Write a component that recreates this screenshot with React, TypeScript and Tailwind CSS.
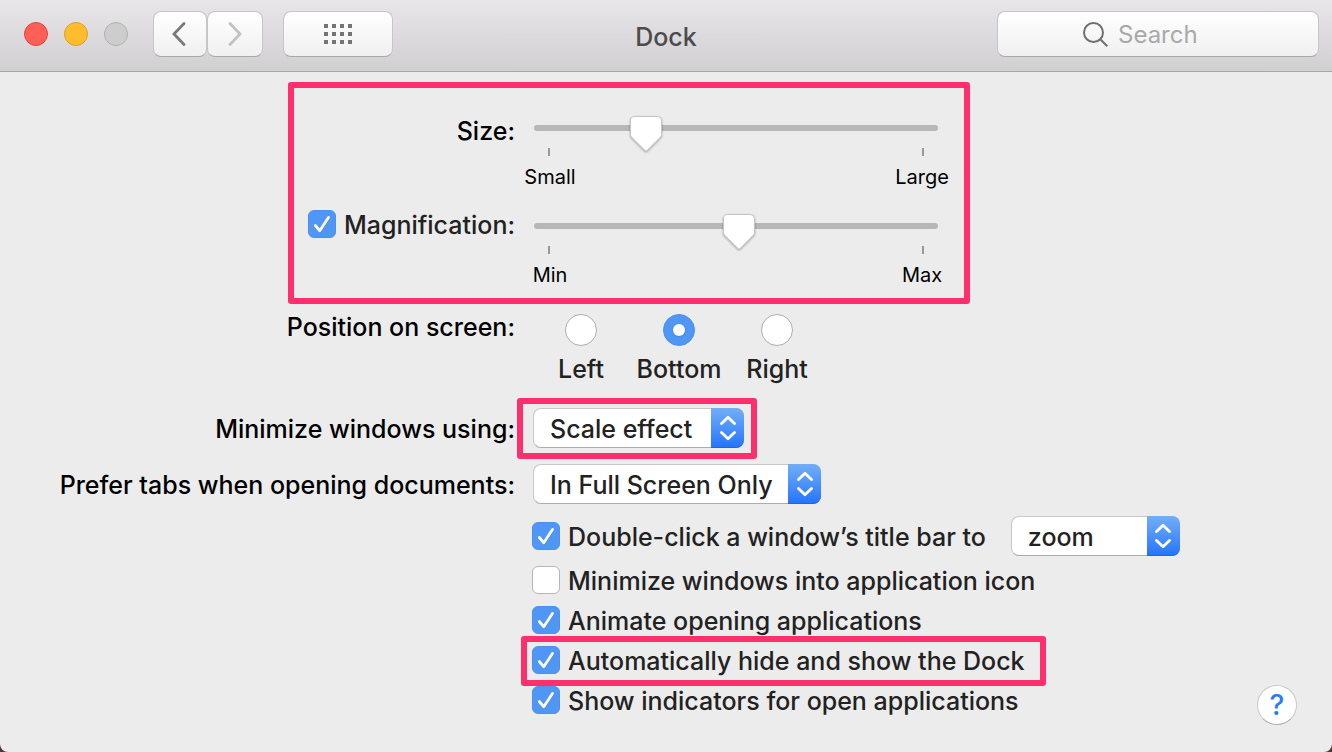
/**
 * Dock preferences pane
 *
 * Title bar with navigation and search, then the Dock settings form.
 */

import React, { useState } from 'react';
import { clsx } from 'clsx';
import { twMerge } from 'tailwind-merge';

function cn(...inputs: any[]) {
  return twMerge(clsx(inputs));
}

// ── Shared bits ───────────────────────────────────────────────────────────────
const toolbarButton =
  'flex items-center justify-center h-[46px] rounded-lg border border-[#c6c5c7] border-b-[#a9a8aa] bg-linear-to-b from-white to-[#f0f0f0]';

const rowGrid = 'grid grid-cols-[515fr_800fr] gap-x-[17px]';

function Highlight({ className }: { className: string }) {
  return (
    <div
      className={cn(
        'absolute rounded-[3px] border-6 border-[#ff2f6d] pointer-events-none',
        className
      )}
    />
  );
}

interface CheckProps {
  label: string;
  defaultChecked?: boolean;
  className?: string;
}

function Check({ label, defaultChecked = false, className }: CheckProps) {
  return (
    <label className={cn('flex items-center gap-2 text-[#222]', className)}>
      <span className="relative size-7 shrink-0">
        <input
          type="checkbox"
          defaultChecked={defaultChecked}
          className="peer block appearance-none size-7 rounded-md border border-[#b5b5b5] bg-white checked:border-[#4b92ee] checked:bg-[#5097f5]"
        />
        <svg
          viewBox="0 0 28 28"
          className="absolute inset-0 hidden peer-checked:block pointer-events-none"
          fill="none"
          strokeLinecap="round"
          strokeLinejoin="round"
          strokeWidth="2.8"
        >
          <path d="M7.5 16.2l4.5 5.3 8.5-13" stroke="#3f7fd2" strokeOpacity="0.6" />
          <path d="M7.3 15.5l4.5 5.3 8.7-13.3" stroke="#fff" />
        </svg>
      </span>
      <span className="pt-0.5 whitespace-nowrap">{label}</span>
    </label>
  );
}

interface SliderProps {
  id: string;
  name: string;
  initial: number;
  low: string;
  high: string;
}

function Slider({ id, name, initial, low, high }: SliderProps) {
  const [value, setValue] = useState(initial);

  return (
    <div className="w-[404px] ml-0.5 pt-1">
      <div className="relative h-9">
        <input
          id={id}
          aria-label={name}
          type="range"
          min={0}
          max={372}
          value={value}
          onChange={(e) => setValue(Number(e.target.value))}
          className="block w-full h-6 appearance-none bg-transparent [&::-webkit-slider-runnable-track]:h-1.5 [&::-webkit-slider-runnable-track]:rounded-full [&::-webkit-slider-runnable-track]:bg-[#b7b7b7] [&::-webkit-slider-thumb]:appearance-none [&::-webkit-slider-thumb]:w-8 [&::-webkit-slider-thumb]:h-1.5"
        />
        <svg
          viewBox="0 0 32 36"
          className="absolute top-0 w-8 h-9 overflow-visible pointer-events-none drop-shadow-[0_1px_1px_rgba(0,0,0,0.3)]"
          style={{ left: `calc((100% - 32px) * ${value / 372})` }}
        >
          <path
            d="M4.5 .5h23a4 4 0 0 1 4 4v14a4 4 0 0 1-1 2.6L17 34.5a1.3 1.3 0 0 1-2 0L1.5 21.1a4 4 0 0 1-1-2.6V4.5a4 4 0 0 1 4-4z"
            fill="#fff"
            stroke="#c4c4c4"
            strokeWidth="1"
          />
        </svg>
      </div>
      <div className="flex justify-between px-3.5 -mt-1">
        <span className="w-0.5 h-2 bg-[#9a9a9a]" />
        <span className="w-0.5 h-2 bg-[#9a9a9a]" />
      </div>
      <div className="flex justify-between -mx-4 mt-[9px] text-[20px] leading-6 font-normal">
        <span className="w-16 text-center">{low}</span>
        <span className="w-16 text-center">{high}</span>
      </div>
    </div>
  );
}

interface PopupProps {
  id: string;
  label?: string;
  options: string[];
  className: string;
}

function Popup({ id, label, options, className }: PopupProps) {
  return (
    <div className={cn('relative h-10 shrink-0', className)}>
      <select
        id={id}
        aria-label={label}
        className="block w-full h-10 appearance-none rounded-lg border border-[#c8c8c8] border-b-[#acacac] bg-white pt-0.5 pl-4 text-[#222]"
      >
        {options.map((option) => (
          <option key={option}>{option}</option>
        ))}
      </select>
      <span className="absolute inset-y-0 right-0 w-[33px] rounded-r-lg border-b border-[#1f63ea] bg-linear-to-b from-[#72aef7] to-[#2574fb] flex items-center justify-center pointer-events-none">
        <svg
          viewBox="0 0 16 26"
          className="w-4 h-[26px]"
          fill="none"
          stroke="#fff"
          strokeWidth="2.8"
          strokeLinecap="round"
          strokeLinejoin="round"
        >
          <path d="M1.5 8.5L8 2.2l6.5 6.3M1.5 17.5L8 23.8l6.5-6.3" />
        </svg>
      </span>
    </div>
  );
}

// ── Title bar ─────────────────────────────────────────────────────────────────
function TitleBar() {
  return (
    <header className="grid grid-cols-[1fr_auto_1fr] items-start h-[72px] pt-[11px] border-b border-[#a8a7a8] bg-linear-to-b from-[#e8e6e9] to-[#d1cfd2]">
      <div className="flex items-center pl-6">
        <div className="flex gap-4">
          <button aria-label="Close" className="size-6 rounded-full border border-[#e2453e] bg-[#ff5f57]" />
          <button aria-label="Minimize" className="size-6 rounded-full border border-[#df9c27] bg-[#ffbd2e]" />
          <button aria-label="Zoom" disabled className="size-6 rounded-full border border-[#b1b1b1] bg-[#cdcdcd]" />
        </div>
        <div className="flex ml-[25px]">
          <button aria-label="Back" className={cn(toolbarButton, 'w-[54px]')}>
            <svg viewBox="0 0 14 24" className="w-3.5 h-6 mr-0.5" fill="none" stroke="#7a7a7a" strokeWidth="2.8" strokeLinecap="round">
              <path d="M12 1.5L2 12l10 10.5" />
            </svg>
          </button>
          <button aria-label="Forward" disabled className={cn(toolbarButton, 'w-14')}>
            <svg viewBox="0 0 14 24" className="w-3.5 h-6" fill="none" stroke="#c2c2c2" strokeWidth="2.8" strokeLinecap="round">
              <path d="M2 1.5L12 12 2 22.5" />
            </svg>
          </button>
        </div>
        <button aria-label="Show All" className={cn(toolbarButton, 'w-[110px] ml-5')}>
          <svg viewBox="0 0 28 20" className="w-7 h-5" fill="#747474">
            {[0, 8, 16].map((y) =>
              [0, 8, 16, 24].map((x) => <rect key={`${x}-${y}`} x={x} y={y} width="4" height="4" />)
            )}
          </svg>
        </button>
      </div>

      <h1 className="pt-[10px] font-[450] text-[#4b4b4b]">Dock</h1>

      <div className="flex justify-end pr-[13px]">
        <label className={cn(toolbarButton, 'w-[322px] justify-start pl-[84px] gap-2.5')}>
          <svg viewBox="0 0 26 26" className="size-[26px] shrink-0" fill="none" stroke="#6f6f6f" strokeWidth="2">
            <circle cx="11.5" cy="11.5" r="9.5" />
            <path d="M18.3 18.3l7 7" />
          </svg>
          <input
            type="search"
            aria-label="Search"
            placeholder="Search"
            className="min-w-0 flex-1 pt-0.5 bg-transparent text-[24px] font-normal outline-none placeholder:text-[#a9a9a9]"
          />
        </label>
      </div>
    </header>
  );
}

// ── Window ────────────────────────────────────────────────────────────────────
export default function App() {
  return (
    <div className="min-h-screen flex flex-col bg-[#4a3a30] font-['Inter','Liberation_Sans',sans-serif] font-[450] text-[25px] leading-8 text-black">
      <TitleBar />

      <main className="flex-1 rounded-b-lg bg-[#ececec] pt-10 pb-[27px]">
        {/* Size + magnification */}
        <div className={cn(rowGrid, 'h-[98px]')}>
          <label htmlFor="size" className="pt-[3px] text-right">Size:</label>
          <div className="relative">
            <Slider id="size" name="Size" initial={96} low="Small" high="Large" />
            <Highlight className="-top-[30px] -left-[244px] w-[682px] h-[222px]" />
          </div>
        </div>
        <div className={cn(rowGrid, 'h-[100px]')}>
          <Check label="Magnification:" defaultChecked className="h-7 justify-end" />
          <Slider id="magnification" name="Magnification" initial={189} low="Min" high="Max" />
        </div>

        {/* Position */}
        <div role="radiogroup" aria-labelledby="position" className={cn(rowGrid, 'h-[74px]')}>
          <span id="position" className="pt-px text-right">Position on screen:</span>
          <div className="flex pt-1">
            {['Left', 'Bottom', 'Right'].map((side) => (
              <label key={side} className="w-[98px] flex flex-col items-center gap-[7px] text-[#222]">
                <span className="relative size-8">
                  <input
                    type="radio"
                    name="position"
                    defaultChecked={side === 'Bottom'}
                    className="peer block appearance-none size-8 rounded-full border border-[#adadad] bg-white checked:border-[#4b92ee] checked:bg-[#5097f5]"
                  />
                  <span className="absolute inset-0 m-auto size-3 rounded-full bg-white shadow-sm hidden peer-checked:block" />
                </span>
                {side}
              </label>
            ))}
          </div>
        </div>

        {/* Pop-up menus */}
        <div className={cn(rowGrid, 'items-center mt-6')}>
          <label htmlFor="effect" className="pt-0.5 text-right">Minimize windows using:</label>
          <div className="relative w-[211px] ml-px">
            <Popup id="effect" options={['Scale effect', 'Genie effect']} className="w-full" />
            <Highlight className="-top-2.5 -bottom-[11px] -left-4 -right-[13px]" />
          </div>
        </div>
        <div className={cn(rowGrid, 'items-center mt-4')}>
          <label htmlFor="tabs" className="pt-0.5 text-right">Prefer tabs when opening documents:</label>
          <Popup id="tabs" options={['In Full Screen Only', 'Always', 'Manually']} className="w-72 ml-px" />
        </div>

        {/* Options + help */}
        <div className={cn(rowGrid, 'mt-3')}>
          <div className="col-start-2 flex items-end justify-between">
            <div className="flex flex-col items-start pb-[5px]">
              <div className="flex items-center gap-[25px] mb-1">
                <Check label="Double-click a window’s title bar to" defaultChecked className="h-10" />
                <Popup id="double-click" label="Double-click action" options={['zoom', 'minimize']} className="w-[169px]" />
              </div>
              <Check label="Minimize windows into application icon" className="h-10" />
              <Check label="Animate opening applications" defaultChecked className="h-10" />
              <div className="relative">
                <Check label="Automatically hide and show the Dock" defaultChecked className="h-10" />
                <Highlight className="-top-1 -bottom-1.5 -left-[11px] -right-[21px]" />
              </div>
              <Check label="Show indicators for open applications" defaultChecked className="h-10" />
            </div>
            <button
              aria-label="Help"
              className="size-10 mr-[35px] rounded-full border border-[#c9c9c9] border-b-[#b0b0b0] bg-white text-[28px] text-[#2a7bfb] flex items-center justify-center"
            >
              ?
            </button>
          </div>
        </div>
      </main>
    </div>
  );
}
